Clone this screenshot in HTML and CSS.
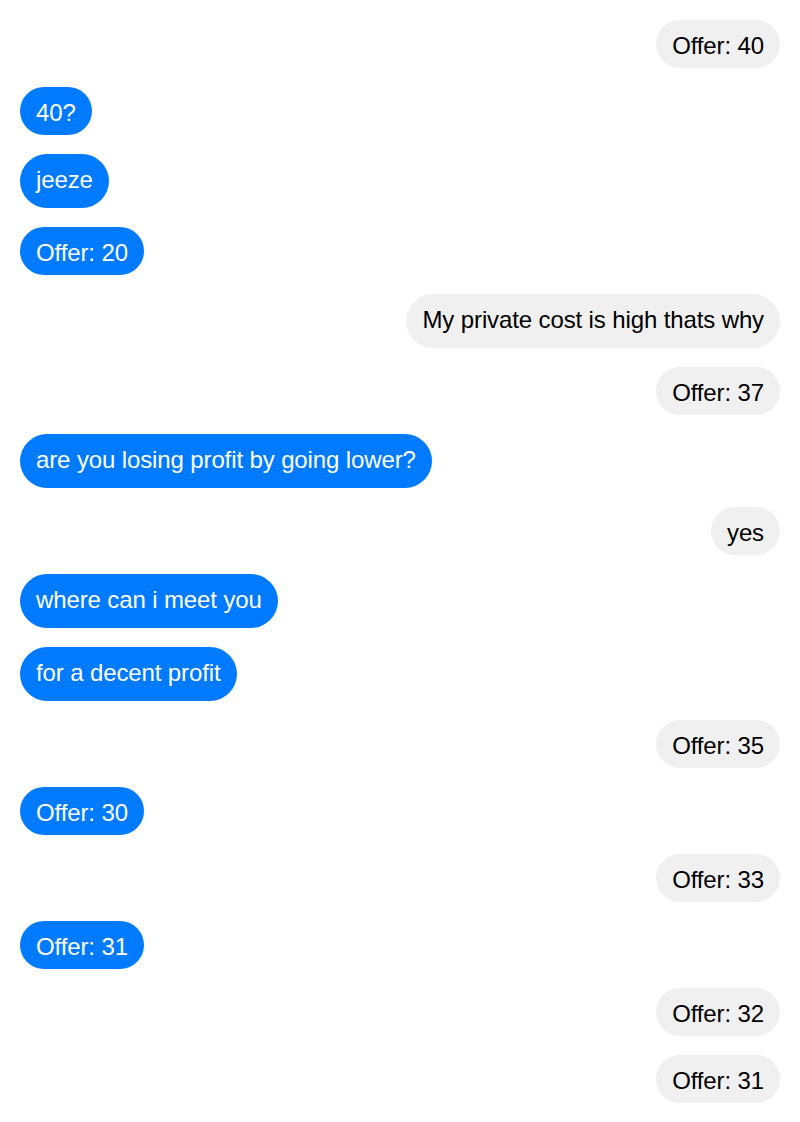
FILE: index.html
```html
<!DOCTYPE html>
<html>
<head>
<meta charset="utf-8">
<link rel="stylesheet" href="styles.css">
</head>
<body>
<div class="chat">
  <div class="bubble me">Offer: 40</div>
  <div class="bubble them">40?</div>
  <div class="bubble them deep">jeeze</div>
  <div class="bubble them">Offer: 20</div>
  <div class="bubble me deep">My private cost is high thats why</div>
  <div class="bubble me">Offer: 37</div>
  <div class="bubble them deep">are you losing profit by going lower?</div>
  <div class="bubble me">yes</div>
  <div class="bubble them deep">where can i meet you</div>
  <div class="bubble them deep">for a decent profit</div>
  <div class="bubble me">Offer: 35</div>
  <div class="bubble them">Offer: 30</div>
  <div class="bubble me">Offer: 33</div>
  <div class="bubble them">Offer: 31</div>
  <div class="bubble me">Offer: 32</div>
  <div class="bubble me">Offer: 31</div>
</div>
</body>
</html>
```

FILE: styles.css
```css
html, body {
  margin: 0;
  padding: 0;
  background: #ffffff;
}

.chat {
  display: flex;
  flex-direction: column;
  gap: 19px;
  padding: 20px;
}

.bubble {
  font-family: "Liberation Sans", Arial, sans-serif;
  font-size: 24px;
  line-height: 28px;
  letter-spacing: -0.12px;
  padding: 12px 16px 8px;
  border-radius: 999px;
  white-space: nowrap;
}

.bubble.deep {
  padding-bottom: 14px;
}

.me {
  align-self: flex-end;
  background: #f0f0f0;
  color: #000000;
}

.them {
  align-self: flex-start;
  background: #007aff;
  color: #ffffff;
}
```
